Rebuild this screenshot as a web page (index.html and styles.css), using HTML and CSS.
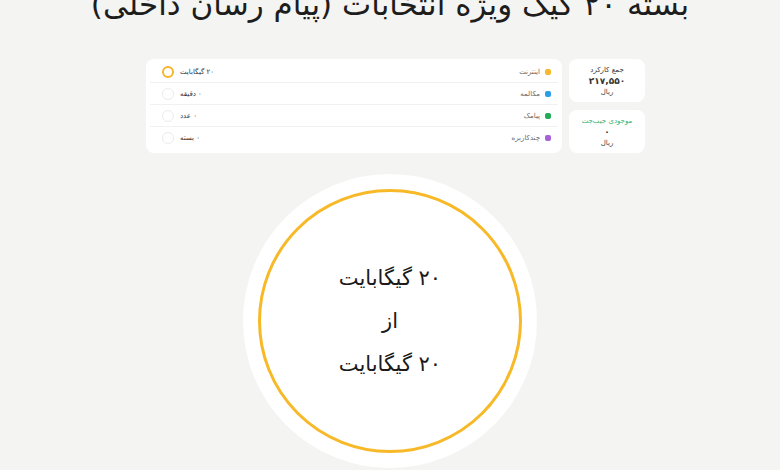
FILE: index.html
```html
<!DOCTYPE html>
<html lang="fa" dir="rtl">
<head>
<meta charset="utf-8">
<title>بسته ۲۰ گیگ</title>
<link rel="stylesheet" href="styles.css">
</head>
<body>
<h1 class="title">بسته ۲۰ گیگ ویژه انتخابات (پیام رسان داخلی)</h1>
<div class="summary">
  <div class="side">
    <div class="stat">
      <div class="stat-label">جمع کارکرد</div>
      <div class="stat-value">۲۱۷,۵۵۰</div>
      <div class="stat-unit">ریال</div>
    </div>
    <div class="stat">
      <div class="stat-label green">موجودی جیب‌جت</div>
      <div class="stat-value">۰</div>
      <div class="stat-unit">ریال</div>
    </div>
  </div>
  <div class="list">
    <div class="row">
      <span class="dot yellow"></span>
      <span class="label">اینترنت</span>
      <span class="value">۲۰ گیگابایت</span>
      <span class="radio active"></span>
    </div>
    <div class="row">
      <span class="dot blue"></span>
      <span class="label">مکالمه</span>
      <span class="value">۰ دقیقه</span>
      <span class="radio"></span>
    </div>
    <div class="row">
      <span class="dot green-bg"></span>
      <span class="label">پیامک</span>
      <span class="value">۰ عدد</span>
      <span class="radio"></span>
    </div>
    <div class="row last">
      <span class="dot purple"></span>
      <span class="label">چندکاربره</span>
      <span class="value">۰ بسته</span>
      <span class="radio"></span>
    </div>
  </div>
</div>
<div class="gauge">
  <div class="ring">
    <p class="line">۲۰ گیگابایت</p>
    <p class="line">از</p>
    <p class="line">۲۰ گیگابایت</p>
  </div>
</div>
</body>
</html>
```
FILE: styles.css
```css
html, body {
  margin: 0;
  padding: 0;
}
body {
  width: 780px;
  height: 470px;
  overflow: hidden;
  background: #f4f4f2;
  font-family: "DejaVu Sans", "Noto Sans", sans-serif;
  color: #222;
}
.title {
  margin: -11px 0 0 0;
  height: 45px;
  font-size: 31px;
  line-height: 30px;
  font-weight: normal;
  text-align: center;
  color: #1d1d1d;
  white-space: nowrap;
}
.summary {
  display: flex;
  gap: 7px;
  margin-top: 25px;
  margin-right: 135px;
  width: 499px;
}
.side {
  display: flex;
  flex-direction: column;
  gap: 8px;
  width: 76px;
}
.stat {
  background: #fff;
  border-radius: 8px;
  height: 43px;
  display: flex;
  flex-direction: column;
  align-items: center;
  justify-content: center;
  gap: 2px;
}
.stat-label {
  font-size: 7px;
  color: #333;
}
.stat-label.green {
  color: #3bb273;
}
.stat-value {
  font-size: 9px;
  font-weight: bold;
  color: #333;
}
.stat-unit {
  font-size: 7px;
  color: #444;
}
.list {
  flex: 1;
  background: #fff;
  border-radius: 8px;
  padding: 2px 0 4px;
}
.row {
  display: flex;
  align-items: center;
  height: 22px;
  padding: 0 7px 0 12px;
  margin: 0 4px;
  border-bottom: 1px solid #f1f1f1;
  box-sizing: border-box;
  font-size: 7px;
}
.row.last {
  border-bottom: none;
}
.dot {
  width: 6px;
  height: 6px;
  border-radius: 2px;
  margin-left: 5px;
  flex: none;
}
.yellow { background: #f8b82b; }
.blue { background: #2b9fe6; }
.green-bg { background: #23ab5a; }
.purple { background: #a95fd8; }
.label {
  flex: 1;
  color: #666;
}
.value {
  color: #333;
  margin-left: 6px;
}
.radio {
  width: 12px;
  height: 12px;
  border-radius: 50%;
  border: 1px solid #ececec;
  box-sizing: border-box;
  flex: none;
}
.radio.active {
  border: 2.5px solid #f6b52a;
}
.gauge {
  width: 294px;
  height: 294px;
  border-radius: 50%;
  background: #fff;
  margin: 21px auto 0;
  display: flex;
  align-items: center;
  justify-content: center;
}
.ring {
  width: 264px;
  height: 264px;
  border-radius: 50%;
  border: 3.5px solid #f7b928;
  box-sizing: border-box;
  display: flex;
  flex-direction: column;
  align-items: center;
  justify-content: center;
}
.line {
  margin: 0;
  font-size: 21px;
  line-height: 43px;
  color: #1a1a1a;
}
```
